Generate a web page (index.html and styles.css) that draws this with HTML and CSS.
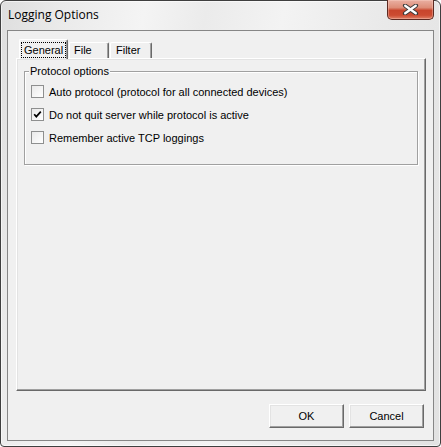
FILE: index.html
```html
<!DOCTYPE html>
<html>
<head>
<meta charset="utf-8">
<link rel="stylesheet" href="styles.css">
</head>
<body>
<div class="window">
  <div class="titlebar">
    <span class="title">Logging Options</span>
    <div class="close">
      <svg width="17" height="11" viewBox="0 0 17 11">
        <path d="M3 1.5 L14 9.5 M14 1.5 L3 9.5" stroke="#3a3a3a" stroke-width="4.2" stroke-linecap="round"/>
        <path d="M3.2 1.7 L13.8 9.3 M13.8 1.7 L3.2 9.3" stroke="#ffffff" stroke-width="2.3" stroke-linecap="round"/>
      </svg>
    </div>
  </div>
  <div class="client">
    <div class="tabs">
      <div class="tab active"><span class="focus">General</span></div>
      <div class="tab">File</div>
      <div class="tab">Filter</div>
    </div>
    <div class="pane">
      <div class="group">
        <span class="legend">Protocol options</span>
        <div class="row"><span class="box"></span><span>Auto protocol (protocol for all connected devices)</span></div>
        <div class="row"><span class="box checked"><svg width="11" height="11" viewBox="0 0 11 11"><path d="M2.2 5.2 L4.3 7.6 L8.8 2.6" fill="none" stroke="#000" stroke-width="1.7"/></svg></span><span>Do not quit server while protocol is active</span></div>
        <div class="row"><span class="box"></span><span>Remember active TCP loggings</span></div>
      </div>
    </div>
    <div class="buttons">
      <div class="btn">OK</div>
      <div class="btn">Cancel</div>
    </div>
  </div>
</div>
</body>
</html>
```

FILE: styles.css
```css
* { box-sizing: border-box; }
html, body { margin: 0; padding: 0; }
body {
  width: 441px;
  height: 447px;
  overflow: hidden;
  background: #ffffff;
  font-family: "Liberation Sans", Tahoma, sans-serif;
  font-size: 11px;
  color: #000;
}
.window {
  width: 441px;
  height: 447px;
  border: 1px solid #3f3f3f;
  border-radius: 6px 6px 4px 4px;
  background: linear-gradient(100deg, #dedede 0%, #eaeaea 12%, #f4f4f4 28%, #ebebeb 40%, #f3f3f3 55%, #e9e9e9 75%, #e2e2e2 100%);
  box-shadow: inset 0 0 0 1px rgba(255,255,255,0.6);
  display: flex;
  flex-direction: column;
}
.titlebar {
  height: 29px;
  position: relative;
  display: flex;
  align-items: flex-start;
}
.title {
  font-family: "Open Sans", "Noto Sans", sans-serif;
  font-size: 12px;
  margin: 5px 0 0 7px;
  color: #000;
}
.close {
  position: absolute;
  right: 6px;
  top: -1px;
  width: 47px;
  height: 20px;
  border: 1px solid #5c2a22;
  border-top: none;
  border-radius: 0 0 5px 5px;
  background: linear-gradient(#eab0a2 0%, #dd8d78 40%, #c8452c 55%, #cc4b31 80%, #e08066 100%);
  box-shadow: inset 0 0 0 1px rgba(255,220,210,0.35);
  display: flex;
  align-items: center;
  justify-content: center;
}
.client {
  margin: 0 6px 5px 6px;
  height: 411px;
  border: 1px solid #868686;
  background: #f0f0f0;
  padding: 8px 7px 0 8px;
  display: flex;
  flex-direction: column;
}
.tabs {
  height: 19px;
  display: flex;
  align-items: flex-end;
  padding-left: 3px;
  position: relative;
  z-index: 2;
}
.tab {
  height: 16px;
  border-top: 1px solid #ffffff;
  border-left: 1px solid #ffffff;
  border-right: 1px solid #696969;
  box-shadow: inset -1px 0 0 #a0a0a0;
  border-radius: 2px 2px 0 0;
  background: #f0f0f0;
  padding: 1px 0 0 4px;
  line-height: 13px;
}
.tab:nth-child(2) { width: 40px; margin-left: 1px; }
.tab:nth-child(3) { width: 42px; margin-left: 1px; padding-left: 5px; }
.tab.active {
  width: 49px;
  height: 20px;
  margin-bottom: -1px;
  padding: 2px 0 0 1px;
}
.focus {
  display: inline-block;
  border: 1px dotted #000;
  padding: 0 2px;
  line-height: 14px;
  height: 16px;
}
.pane {
  height: 333px;
  border-top: 1px solid #ffffff;
  border-left: 1px solid #ffffff;
  border-right: 1px solid #696969;
  border-bottom: 1px solid #696969;
  box-shadow: inset -1px -1px 0 #a0a0a0, inset 1px 1px 0 #e3e3e3;
  padding: 12px 0 0 7px;
}
.group {
  position: relative;
  width: 394px;
  height: 94px;
  border: 1px solid #a0a0a0;
  box-shadow: inset 1px 1px 0 #ffffff, 1px 1px 0 #ffffff;
  padding: 8px 0 0 6px;
}
.legend {
  position: absolute;
  left: 4px;
  top: -8px;
  padding: 0 1px;
  background: #f0f0f0;
  line-height: 14px;
}
.row {
  height: 23px;
  display: flex;
  align-items: center;
  gap: 5px;
}
.box {
  width: 13px;
  height: 13px;
  border: 1px solid #8e8f8f;
  background: linear-gradient(135deg, #e9e9e9, #ffffff);
  display: flex;
  align-items: center;
  justify-content: center;
}
.buttons {
  display: flex;
  justify-content: flex-end;
  gap: 5px;
  margin: 13px 2px 0 0;
}
.btn {
  width: 75px;
  height: 24px;
  border-top: 1px solid #ffffff;
  border-left: 1px solid #ffffff;
  border-right: 1px solid #696969;
  border-bottom: 1px solid #696969;
  box-shadow: inset -1px -1px 0 #a0a0a0, inset 1px 1px 0 #e3e3e3;
  background: #f0f0f0;
  display: flex;
  align-items: center;
  justify-content: center;
}
```
